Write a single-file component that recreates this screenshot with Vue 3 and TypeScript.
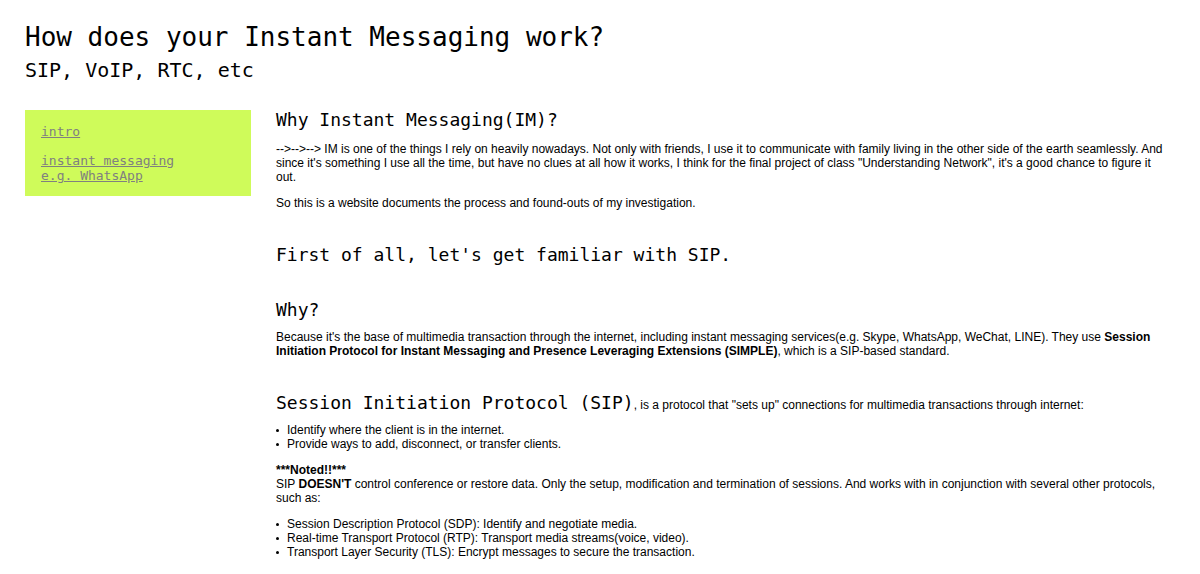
<script setup lang="ts">
interface NavLink {
  label: string
  href: string
}

const links: NavLink[] = [
  { label: 'intro', href: '#intro' },
  { label: 'instant messaging e.g. WhatsApp', href: '#whatsapp' },
]

const duties: string[] = [
  'Identify where the client is in the internet.',
  'Provide ways to add, disconnect, or transfer clients.',
]

const protocols: string[] = [
  'Session Description Protocol (SDP): Identify and negotiate media.',
  'Real-time Transport Protocol (RTP): Transport media streams(voice, video).',
  'Transport Layer Security (TLS): Encrypt messages to secure the transaction.',
]
</script>

<template>
  <div class="page">
    <header>
      <h1>How does your Instant Messaging work?</h1>
      <p class="subtitle">SIP, VoIP, RTC, etc</p>
    </header>
    <div class="columns">
      <nav class="menu">
        <a v-for="link in links" :key="link.href" :href="link.href">{{ link.label }}</a>
      </nav>
      <main>
        <section id="intro" class="intro">
          <h2>Why Instant Messaging(IM)?</h2>
          <div class="body">
            <p>
              --&gt;--&gt;--&gt; IM is one of the things I rely on heavily nowadays. Not only with friends, I use it to
              communicate with family living in the other side of the earth seamlessly. And since it's something I use
              all the time, but have no clues at all how it works, I think for the final project of class "Understanding
              Network", it's a good chance to figure it out.
            </p>
            <p>So this is a website documents the process and found-outs of my investigation.</p>
          </div>
        </section>
        <section>
          <h2>First of all, let's get familiar with SIP.</h2>
        </section>
        <section>
          <h2>Why?</h2>
          <p>
            Because it's the base of multimedia transaction through the internet, including instant messaging
            services(e.g. Skype, WhatsApp, WeChat, LINE). They use
            <strong>Session Initiation Protocol for Instant Messaging and Presence Leveraging Extensions (SIMPLE)</strong>,
            which is a SIP-based standard.
          </p>
        </section>
        <section>
          <div class="lead">
            <h2>Session Initiation Protocol (SIP)</h2><span>, is a protocol that "sets up" connections for multimedia transactions through internet:</span>
          </div>
          <div class="body">
            <ul>
              <li v-for="duty in duties" :key="duty">{{ duty }}</li>
            </ul>
            <p>
              <strong>***Noted!!***</strong><br />
              SIP <strong>DOESN'T</strong> control conference or restore data. Only the setup, modification and
              termination of sessions. And works with in conjunction with several other protocols, such as:
            </p>
            <ul>
              <li v-for="protocol in protocols" :key="protocol">{{ protocol }}</li>
            </ul>
          </div>
        </section>
      </main>
    </div>
  </div>
</template>

<style>
body {
  margin: 0;
  background: #fff;
}
</style>

<style scoped>
.page {
  padding: 20px 32px 0 25px;
  color: #000;
  font: 12px/14px "Liberation Sans", Arial, sans-serif;
}

h1,
h2,
p,
ul {
  margin: 0;
}

h1,
h2,
.subtitle,
.menu {
  font-family: "DejaVu Sans Mono", monospace;
  font-weight: 400;
}

h1 {
  font-size: 26px;
  line-height: 34px;
}

.subtitle {
  margin-top: 4px;
  font-size: 20px;
  line-height: 24px;
}

.columns {
  display: grid;
  grid-template-columns: 226px minmax(0, 1fr);
  column-gap: 25px;
  align-items: start;
  margin-top: 28px;
}

.menu {
  display: grid;
  gap: 14px;
  justify-items: start;
  padding: 14px 56px 13px 16px;
  background: #cffb5a;
  font-size: 13px;
  line-height: 15px;
}

.menu a {
  color: #808080;
}

main {
  display: grid;
  gap: 35px;
}

section {
  display: grid;
  gap: 10px;
}

.intro,
.body {
  display: grid;
  gap: 12px;
}

h2 {
  font-size: 18px;
  line-height: 20px;
}

.lead h2,
.lead span {
  display: inline;
}

ul {
  padding: 0;
  list-style: none;
}

li {
  display: flex;
  align-items: center;
  gap: 8px;
}

li::before {
  content: "";
  flex: none;
  width: 3px;
  height: 3px;
  border-radius: 50%;
  background: #000;
}
</style>
